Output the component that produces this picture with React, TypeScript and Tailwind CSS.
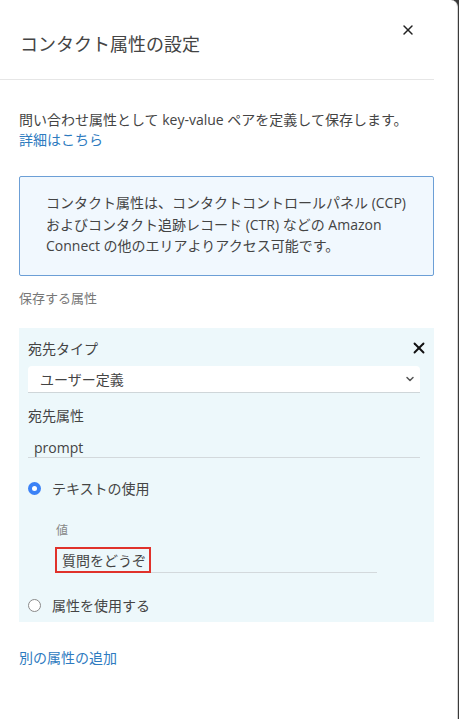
import {X, ChevronDown} from 'lucide-react'

const font = {fontFamily: '"Open Sans", "Noto Sans CJK JP", sans-serif'}

const Radio = ({checked, label}: {checked?: boolean; label: string}) => (
	<div className="flex items-center h-5">
		{checked ? (
			<span className="w-[13px] h-[13px] rounded-full bg-[#3b82f6] flex items-center justify-center">
				<span className="w-[5px] h-[5px] rounded-full bg-white" />
			</span>
		) : (
			<span className="w-[13px] h-[13px] rounded-full border border-[#8a8a8a] bg-white" />
		)}
		<span className="ml-[11px] text-[14px] text-[#444]">{label}</span>
	</div>
)

const App = () => {
	return (
		<div className="w-[459px] h-[719px] bg-[#3a3a3a] overflow-hidden" style={font}>
			<div className="h-full bg-white rounded-tr-[7px] border-r border-[#d5d5d5] w-[458px]">
				<div className="w-[434px]">
					<header className="relative h-[80px] border-b border-[#e6e6e6]">
						<h2 className="absolute left-[20px] top-[32px] text-[18px] leading-6 text-[#444]">コンタクト属性の設定</h2>
						<button className="absolute left-[400px] top-[22px] text-[#222]">
							<X className="w-4 h-4" strokeWidth={2.2} />
						</button>
					</header>

					<div className="pl-[19px] pt-[30px]">
						<p className="text-[14px] leading-5 text-[#444]">
							問い合わせ属性として key-value ペアを定義して保存します。
							<br />
							<a className="text-[#2e7bbf]">詳細はこちら</a>
						</p>

						<div className="mt-[26px] h-[100px] border border-[#6c9fd6] rounded-[2px] bg-[#f1f8fe] pl-[26px] pr-[24px] pt-[15px]">
							<p className="text-[14px] leading-[21.5px] text-[#444]">
								コンタクト属性は、コンタクトコントロールパネル (CCP) およびコンタクト追跡レコード (CTR) などの Amazon Connect の他のエリアよりアクセス可能です。
							</p>
						</div>

						<p className="mt-[12px] text-[13px] leading-5 text-[#777]">保存する属性</p>

						<div className="mt-[20px] h-[294px] bg-[#edf8fb] pl-[9px] pr-[14px] pt-[10px]">
							<div className="flex items-center justify-between h-5">
								<span className="text-[14px] text-[#444]">宛先タイプ</span>
								<X className="w-[18px] h-[18px] text-[#111] -mr-[8px]" strokeWidth={2.5} />
							</div>

							<div className="mt-[8px] h-[27px] bg-white rounded-t-[4px] border-b border-[#cfd6d9] flex items-center justify-between pl-[12px] pr-[4px]">
								<span className="text-[14px] text-[#444]">ユーザー定義</span>
								<ChevronDown className="w-[12px] h-[12px] text-[#555]" strokeWidth={3} />
							</div>

							<p className="mt-[13px] text-[14px] leading-5 text-[#444]">宛先属性</p>

							<div className="mt-[12px] h-[20px] border-b border-[#d3d9dc] pl-[6px] flex items-center">
								<span className="text-[14px] text-[#444]">prompt</span>
							</div>

							<div className="mt-[20px]">
								<Radio checked label="テキストの使用" />
							</div>

							<p className="mt-[23px] ml-[28px] text-[12px] leading-5 text-[#888]">値</p>

							<div className="mt-[6px] ml-[27px] w-[322px] h-[26px] border-b border-[#d3d9dc] relative">
								<div className="absolute left-0 top-0 h-[26px] w-[96px] border-2 border-[#e0322b] flex items-center pl-[5px]">
									<span className="text-[14px] text-[#444]">質問をどうぞ</span>
								</div>
							</div>

							<div className="mt-[22px]">
								<Radio label="属性を使用する" />
							</div>
						</div>

						<a className="block mt-[26px] text-[14px] leading-5 text-[#2e7bbf]">別の属性の追加</a>
					</div>
				</div>
			</div>
		</div>
	)
}

export default App
